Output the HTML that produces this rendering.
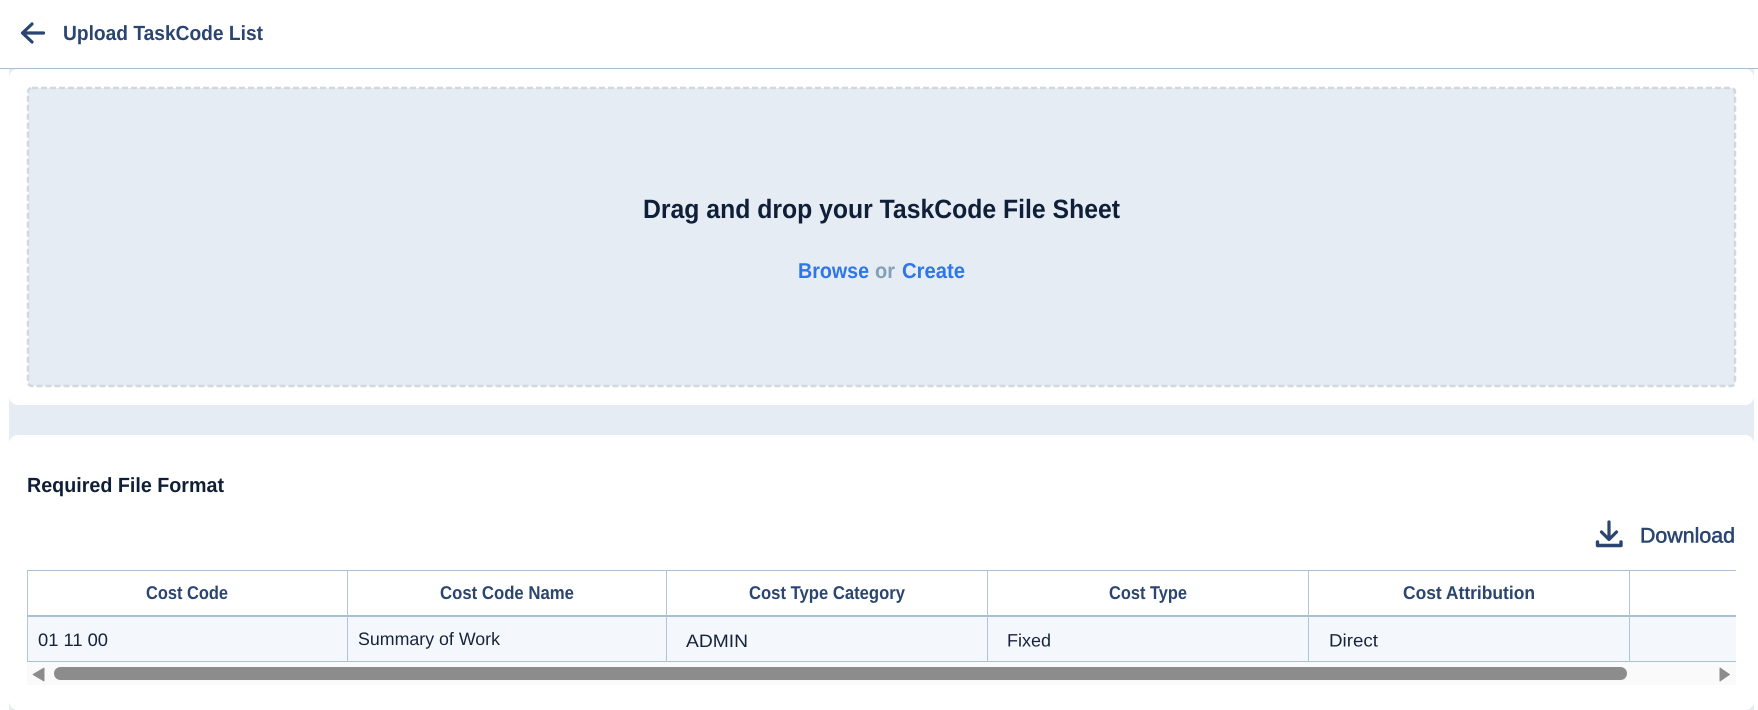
<!DOCTYPE html>
<html lang="en">
<head>
<meta charset="utf-8">
<title>Upload TaskCode List</title>
<style>
html,body{margin:0;padding:0;width:1758px;height:710px;overflow:hidden;background:#fff}
svg{display:block;position:absolute;left:0;top:0}
text{font-family:"Liberation Sans",Arial,sans-serif;text-rendering:geometricPrecision}
.b{font-weight:700}
</style>
</head>
<body>
<svg width="1758" height="710" viewBox="0 0 1758 710" xmlns="http://www.w3.org/2000/svg">
  <rect width="1758" height="710" fill="#fff"/>
  <!-- page background strip -->
  <rect x="9" y="69" width="1745" height="641" fill="#e6ecf4"/>
  <!-- cards -->
  <rect x="9" y="69" width="1745" height="336" rx="9" fill="#fff"/>
  <rect x="9" y="435" width="1745" height="275" rx="9" fill="#fff"/>
  <!-- header -->
  <rect x="0" y="0" width="1758" height="68" fill="#fff"/>
  <rect x="0" y="68" width="1758" height="1" fill="#a9c0d4"/>
  <path d="M43.500 33H23.500M32 24L22.500 33L32 42" fill="none" stroke="#2a4570" stroke-width="3.200" stroke-linecap="round" stroke-linejoin="round"/>
  <text class="b" x="63" y="40" font-size="20.500" fill="#2a4570" textLength="200" lengthAdjust="spacingAndGlyphs">Upload TaskCode List</text>

  <!-- drop zone -->
  <rect x="28" y="88" width="1707" height="298" rx="4" fill="#e6ecf4" stroke="#d3d7df" stroke-width="2.500" stroke-dasharray="6 3"/>
  <text class="b" x="643" y="218" font-size="26.500" fill="#0f1f38" textLength="477" lengthAdjust="spacingAndGlyphs">Drag and drop your TaskCode File Sheet</text>
  <text class="b" x="798" y="278" font-size="21.500" fill="#2f76e8" textLength="71" lengthAdjust="spacingAndGlyphs">Browse</text>
  <text class="b" x="875" y="278" font-size="21.500" fill="#84a0b8" textLength="20" lengthAdjust="spacingAndGlyphs">or</text>
  <text class="b" x="902" y="278" font-size="21.500" fill="#2f76e8" textLength="63" lengthAdjust="spacingAndGlyphs">Create</text>

  <!-- required format -->
  <text class="b" x="27" y="492" font-size="20.500" fill="#0f1f38" textLength="197" lengthAdjust="spacingAndGlyphs">Required File Format</text>
  <path d="M1609 522V539M1601.500 532L1609 539.500L1616.500 532" fill="none" stroke="#2a4570" stroke-width="3.200" stroke-linecap="round" stroke-linejoin="round"/>
  <path d="M1597.500 542V545.500H1621V542" fill="none" stroke="#2a4570" stroke-width="3.400" stroke-linecap="round" stroke-linejoin="round"/>
  <text x="1640" y="542.500" font-size="21" fill="#2a4570" stroke="#2a4570" stroke-width=".55" textLength="95" lengthAdjust="spacingAndGlyphs">Download</text>

  <!-- table -->
  <rect x="27" y="570" width="1709" height="45" fill="#fff"/>
  <rect x="27" y="617" width="1709" height="44" fill="#f4f7fb"/>
  <rect x="27" y="570" width="1709" height="1" fill="#a9c0d4"/>
  <rect x="27" y="615" width="1709" height="2" fill="#a9c0d4"/>
  <rect x="27" y="661" width="1709" height="1" fill="#a9c0d4"/>
  <g fill="#b1c5d6">
    <rect x="27" y="570" width="1" height="92"/>
    <rect x="347" y="570" width="1" height="92"/>
    <rect x="666" y="570" width="1" height="92"/>
    <rect x="987" y="570" width="1" height="92"/>
    <rect x="1308" y="570" width="1" height="92"/>
    <rect x="1629" y="570" width="1" height="92"/>
  </g>
  <g font-size="18.500" fill="#2a4570">
    <text class="b" x="146" y="599" textLength="82" lengthAdjust="spacingAndGlyphs">Cost Code</text>
    <text class="b" x="440" y="599" textLength="134" lengthAdjust="spacingAndGlyphs">Cost Code Name</text>
    <text class="b" x="749" y="599" textLength="156" lengthAdjust="spacingAndGlyphs">Cost Type Category</text>
    <text class="b" x="1109" y="599" textLength="78" lengthAdjust="spacingAndGlyphs">Cost Type</text>
    <text class="b" x="1403" y="599" textLength="132" lengthAdjust="spacingAndGlyphs">Cost Attribution</text>
  </g>
  <g font-size="18" fill="#16233a">
    <text x="38" y="646" textLength="70" lengthAdjust="spacingAndGlyphs">01 11 00</text>
    <text x="358" y="645" textLength="142" lengthAdjust="spacingAndGlyphs">Summary of Work</text>
    <text x="686" y="647" textLength="62" lengthAdjust="spacingAndGlyphs">ADMIN</text>
    <text x="1007" y="646.500" textLength="44" lengthAdjust="spacingAndGlyphs">Fixed</text>
    <text x="1329" y="646.500" textLength="49" lengthAdjust="spacingAndGlyphs">Direct</text>
  </g>

  <!-- scrollbar -->
  <rect x="27" y="662" width="1709" height="23" fill="#fafafa"/>
  <rect x="54" y="667" width="1573" height="13" rx="6.500" fill="#8c8c8c"/>
  <path d="M44 668V681L33 674.500Z" fill="#8c8c8c" stroke="#8c8c8c" stroke-linejoin="round"/>
  <path d="M1720 668V681L1729.500 674.500Z" fill="#8c8c8c" stroke="#8c8c8c" stroke-linejoin="round"/>
</svg>
</body>
</html>
